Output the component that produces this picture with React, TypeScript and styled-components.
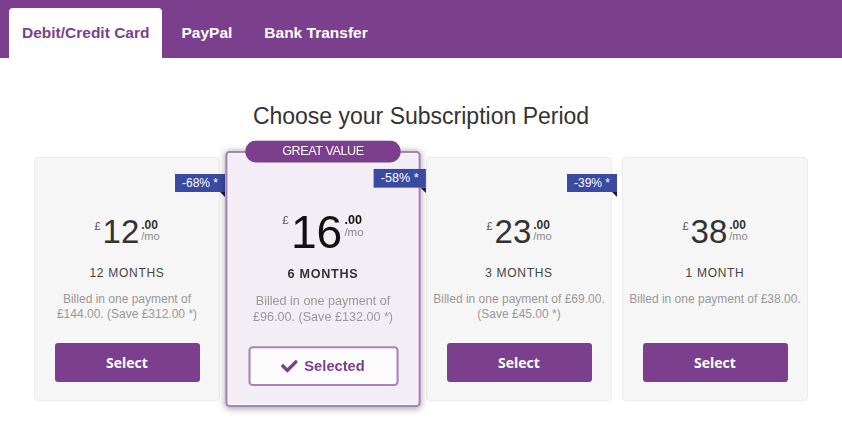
import React from "react";
import styled, { createGlobalStyle } from "styled-components";
import { FaCheck } from "react-icons/fa";

const PURPLE = "#7c3f8d";

const GlobalStyle = createGlobalStyle`
  body {
    margin: 0;
    background: #fff;
    font-family: "Liberation Sans", Arial, sans-serif;
  }
`;

const Page = styled.div`
  min-height: 100vh;
  overflow: hidden;
`;

const Header = styled.div`
  display: flex;
  align-items: flex-end;
  gap: 6px;
  height: 58px;
  box-sizing: border-box;
  padding: 8px 0 0 9px;
  background: ${PURPLE};
`;

const Tab = styled.div<{ $active?: boolean }>`
  display: flex;
  align-items: center;
  height: 50px;
  padding: 0 13px;
  border-radius: 4px 4px 0 0;
  background: ${(p) => (p.$active ? "#fff" : "transparent")};
  color: ${(p) => (p.$active ? PURPLE : "#fff")};
  font-size: 15.5px;
  font-weight: bold;
`;

const Main = styled.div`
  padding: 44px 0 24px;
`;

const Title = styled.h1`
  margin: 0;
  text-align: center;
  font-size: 23px;
  line-height: 28px;
  font-weight: normal;
  color: #333;
`;

const Cards = styled.div`
  display: flex;
  align-items: flex-start;
  justify-content: center;
  gap: 10px;
  margin-top: 27px;
`;

const Card = styled.div<{ $selected?: boolean }>`
  position: relative;
  flex: none;
  width: 186px;
  height: 244px;
  box-sizing: border-box;
  display: flex;
  flex-direction: column;
  align-items: center;
  padding: 53px 6px 18px;
  border-radius: 4px;
  border: ${(p) => (p.$selected ? "2px solid #a982b9" : "1px solid #ececec")};
  background: ${(p) => (p.$selected ? "#f3eef5" : "#f6f6f6")};
  box-shadow: ${(p) =>
    p.$selected
      ? "inset 0 0 0 1px #fff, 0 1px 7px rgba(0, 0, 0, 0.35)"
      : "none"};
  transform: ${(p) => (p.$selected ? "scale(1.05)" : "none")};
  z-index: ${(p) => (p.$selected ? 1 : 0)};
`;

const Badge = styled.div`
  position: absolute;
  top: -12px;
  left: 50%;
  transform: translateX(-50%);
  width: 148px;
  height: 21px;
  line-height: 21px;
  border-radius: 11px;
  background: ${PURPLE};
  color: #fff;
  text-align: center;
  font-size: 12px;
  letter-spacing: -0.4px;
`;

const Ribbon = styled.div<{ $selected?: boolean }>`
  position: absolute;
  top: ${(p) => (p.$selected ? "15px" : "16px")};
  right: ${(p) => (p.$selected ? "-7px" : "-6px")};
  height: 18px;
  line-height: 18px;
  padding: 0 7px;
  background: #3a4aa0;
  color: #fff;
  font-size: 12px;

  &::after {
    content: "";
    position: absolute;
    right: 0;
    top: 100%;
    border-top: 5px solid #1c1c38;
    border-left: 5px solid transparent;
  }
`;

const PriceRow = styled.div`
  display: flex;
  align-items: flex-start;
  justify-content: center;
  height: 46px;
`;

const Currency = styled.span<{ $big?: boolean }>`
  margin-top: ${(p) => (p.$big ? "6px" : "10px")};
  margin-right: 2px;
  font-size: 11px;
  line-height: 11px;
  color: #555;
`;

const Amount = styled.span<{ $big?: boolean }>`
  margin-top: ${(p) => (p.$big ? "0" : "4px")};
  font-size: ${(p) => (p.$big ? "44px" : "33px")};
  line-height: 1;
  color: ${(p) => (p.$big ? "#111" : "#333")};
`;

const Cents = styled.div<{ $big?: boolean }>`
  display: flex;
  flex-direction: column;
  margin-top: ${(p) => (p.$big ? "6px" : "9px")};
  margin-left: 2px;

  b {
    font-size: 12px;
    line-height: 11px;
    color: ${(p) => (p.$big ? "#111" : "#333")};
  }

  span {
    font-size: 11px;
    line-height: 11px;
    color: #888;
  }
`;

const Period = styled.div<{ $big?: boolean }>`
  margin-top: 8px;
  font-size: 12px;
  line-height: 16px;
  letter-spacing: 0.7px;
  font-weight: ${(p) => (p.$big ? "bold" : "normal")};
  color: ${(p) => (p.$big ? "#333" : "#444")};
`;

const Billing = styled.div`
  margin-top: 11px;
  text-align: center;
  font-size: 12px;
  line-height: 15px;
  color: #999;
`;

const SelectButton = styled.button`
  margin-top: auto;
  width: 145px;
  height: 39px;
  border: none;
  border-radius: 3px;
  background: ${PURPLE};
  color: #fff;
  font-family: "Open Sans", "Liberation Sans", sans-serif;
  font-size: 14px;
  font-weight: bold;
`;

const SelectedButton = styled.button`
  margin-top: auto;
  width: 143px;
  height: 38px;
  display: flex;
  align-items: center;
  justify-content: center;
  gap: 6px;
  border: 2px solid #a982b9;
  border-radius: 4px;
  background: #fdfcfd;
  color: ${PURPLE};
  font-family: "Liberation Sans", Arial, sans-serif;
  font-size: 14px;
  font-weight: bold;
`;

type Plan = {
  price: string;
  period: string;
  billing: string;
  discount?: string;
  selected?: boolean;
};

const plans: Plan[] = [
  {
    price: "12",
    period: "12 MONTHS",
    billing: "Billed in one payment of £144.00. (Save £312.00 *)",
    discount: "-68% *",
  },
  {
    price: "16",
    period: "6 MONTHS",
    billing: "Billed in one payment of £96.00. (Save £132.00 *)",
    discount: "-58% *",
    selected: true,
  },
  {
    price: "23",
    period: "3 MONTHS",
    billing: "Billed in one payment of £69.00. (Save £45.00 *)",
    discount: "-39% *",
  },
  {
    price: "38",
    period: "1 MONTH",
    billing: "Billed in one payment of £38.00.",
  },
];

const App: React.FC = () => {
  return (
    <Page>
      <GlobalStyle />
      <Header>
        <Tab $active>Debit/Credit Card</Tab>
        <Tab>PayPal</Tab>
        <Tab>Bank Transfer</Tab>
      </Header>
      <Main>
        <Title>Choose your Subscription Period</Title>
        <Cards>
          {plans.map((plan) => (
            <Card key={plan.period} $selected={plan.selected}>
              {plan.selected && <Badge>GREAT VALUE</Badge>}
              {plan.discount && (
                <Ribbon $selected={plan.selected}>{plan.discount}</Ribbon>
              )}
              <PriceRow>
                <Currency $big={plan.selected}>£</Currency>
                <Amount $big={plan.selected}>{plan.price}</Amount>
                <Cents $big={plan.selected}>
                  <b>.00</b>
                  <span>/mo</span>
                </Cents>
              </PriceRow>
              <Period $big={plan.selected}>{plan.period}</Period>
              <Billing>{plan.billing}</Billing>
              {plan.selected ? (
                <SelectedButton>
                  <FaCheck size={16} />
                  Selected
                </SelectedButton>
              ) : (
                <SelectButton>Select</SelectButton>
              )}
            </Card>
          ))}
        </Cards>
      </Main>
    </Page>
  );
};

export default App;
